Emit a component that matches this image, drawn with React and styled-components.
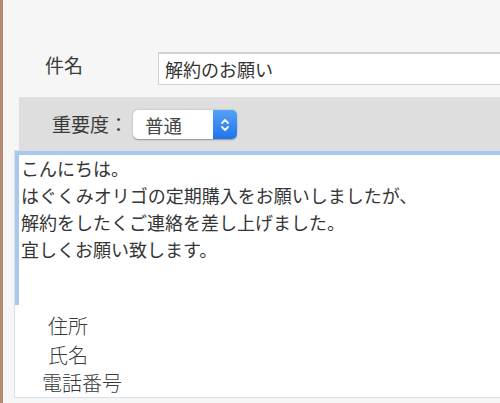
import React from 'react';
import styled, { createGlobalStyle } from 'styled-components';

const GlobalStyle = createGlobalStyle`
  html, body {
    margin: 0;
    padding: 0;
    background: #f6f6f6;
  }
  body {
    font-family: "Noto Sans CJK JP", "Noto Sans", sans-serif;
  }
`;

const Page = styled.div`
  width: 500px;
  height: 403px;
  overflow: hidden;
  display: flex;
  flex-direction: column;
  background: #f6f6f6;
  border-left: 3px solid #b58a72;
  box-sizing: border-box;
  color: #333;
`;

const SubjectRow = styled.div`
  display: grid;
  grid-template-columns: 155px 1fr;
  align-items: center;
  margin-top: 52px;
`;

const Label = styled.span`
  font-size: 19px;
  line-height: 1;
  color: #3a3a3a;
  padding-left: ${p => p.indent || 0}px;
  margin-bottom: ${p => (p.raise || 0) * 2}px;
  white-space: nowrap;
`;

const SubjectInput = styled.div`
  height: 33px;
  box-sizing: border-box;
  display: flex;
  align-items: center;
  padding-left: 6px;
  background: #fff;
  border: 1px solid #d2d2d2;
  border-top: 2px solid #d4d4d4;
  border-right: none;
  font-size: 18px;
  color: #333;
`;

const PriorityBar = styled.div`
  margin-top: 12px;
  margin-left: 16px;
  height: 53px;
  background: #dedede;
  display: flex;
  align-items: center;
  gap: 5px;
  padding-left: 33px;
`;

const Select = styled.div`
  position: relative;
  width: 104px;
  height: 29px;
  box-sizing: border-box;
  border-radius: 5px;
  background: #fff;
  box-shadow: 0 0.5px 1.5px rgba(0, 0, 0, 0.35);
  display: flex;
  align-items: center;
  overflow: hidden;
  margin-top: 2px;
`;

const SelectValue = styled.span`
  flex: 1;
  padding-left: 12px;
  font-size: 18.5px;
  color: #444;
`;

const Stepper = styled.span`
  width: 24px;
  height: 100%;
  display: flex;
  align-items: center;
  justify-content: center;
  background: linear-gradient(#55a1f8, #1f74ec);
`;

const Compose = styled.div`
  margin-left: 11px;
  height: 248px;
  box-sizing: border-box;
  background: #fff;
  border: 1px solid #d5e2ee;
  border-right: none;
  display: flex;
  flex-direction: column;
`;

const Editor = styled.div`
  height: 154px;
  flex: none;
  box-sizing: border-box;
  border-top: 4px solid #a9c8ec;
  border-left: 4px solid #a9c8ec;
  padding-left: 2px;
  font-size: 18px;
  line-height: 27px;
  color: #353535;
  white-space: nowrap;
`;

const Signature = styled.div`
  padding-top: 7px;
  display: flex;
  flex-direction: column;
`;

const SigLine = styled.span`
  font-size: 20px;
  line-height: 28.5px;
  font-weight: 300;
  color: #3a3a3a;
  padding-left: ${p => p.indent}px;
`;

const lines = [
  'こんにちは。',
  'はぐくみオリゴの定期購入をお願いしましたが、',
  '解約をしたくご連絡を差し上げました。',
  '宜しくお願い致します。',
];

const signature = [
  { text: '住所', indent: 33 },
  { text: '氏名', indent: 33 },
  { text: '電話番号', indent: 27 },
];

export default function App() {
  return (
    <>
      <GlobalStyle />
      <Page>
        <SubjectRow>
          <Label indent={42} raise={4}>件名</Label>
          <SubjectInput>解約のお願い</SubjectInput>
        </SubjectRow>
        <PriorityBar>
          <Label>重要度：</Label>
          <Select>
            <SelectValue>普通</SelectValue>
            <Stepper>
              <svg width="10" height="16" viewBox="0 0 10 16" fill="none" stroke="#fff" strokeWidth="1.8" strokeLinecap="round" strokeLinejoin="round">
                <path d="M2 6 L5 3 L8 6" />
                <path d="M2 10 L5 13 L8 10" />
              </svg>
            </Stepper>
          </Select>
        </PriorityBar>
        <Compose>
          <Editor>
            {lines.map(l => <div key={l}>{l}</div>)}
          </Editor>
          <Signature>
            {signature.map(s => (
              <SigLine key={s.text} indent={s.indent}>{s.text}</SigLine>
            ))}
          </Signature>
        </Compose>
      </Page>
    </>
  );
}
